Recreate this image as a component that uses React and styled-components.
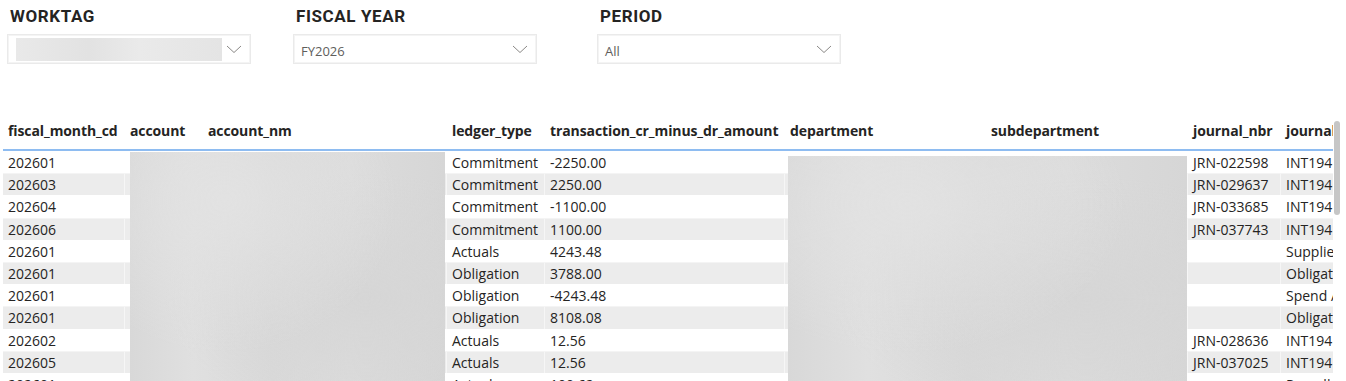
import React from 'react'
import styled, { createGlobalStyle } from 'styled-components'

const Global = createGlobalStyle`
  html, body {
    margin: 0;
    padding: 0;
    background: #ffffff;
    overflow: hidden;
  }
  body {
    font-family: "Open Sans", "Noto Sans", sans-serif;
    color: #252423;
  }
`;

const Page = styled.div`
  width: 1346px;
  height: 381px;
  position: relative;
  overflow: hidden;
`;

const Slicers = styled.div`
  display: flex;
  align-items: flex-start;
  padding: 6px 0 0 7px;
  height: 106px;
  box-sizing: border-box;
`;

const Slicer = styled.div`
  width: 244px;
  margin-left: ${(props) => props.offset || 0}px;
  display: flex;
  flex-direction: column;
`;

const SlicerTitle = styled.div`
  font-family: "Roboto", "Liberation Sans", sans-serif;
  font-weight: 700;
  font-size: 17px;
  line-height: 20px;
  letter-spacing: 0.6px;
  color: #252423;
  padding-left: 3px;
  height: 28px;
`;

const Dropdown = styled.div`
  height: 30px;
  box-sizing: border-box;
  border: 1px solid #eaeaea;
  box-shadow: inset 0 0 0 1px #f4f4f4;
  display: flex;
  align-items: center;
  justify-content: space-between;
  padding: 3px 5px 0 7px;
  font-size: 13px;
  color: #605e5c;
`;

const Hidden = styled.div`
  width: 206px;
  height: 23px;
  margin-left: 1px;
  margin-top: -3px;
  background: linear-gradient(90deg, #e9e9e9 0%, #e2e2e2 35%, #eaeaea 60%, #e4e4e4 100%);
  filter: blur(0.6px);
`;

const Chevron = () => (
  <svg width="16" height="9" viewBox="0 0 16 9" style={{ marginRight: 3, marginTop: -3 }}>
    <path d="M1 1 L8 7.5 L15 1" fill="none" stroke="#8a8886" strokeWidth="1" />
  </svg>
);

const TableArea = styled.div`
  position: relative;
  margin-left: 3px;
  width: 1330px;
  overflow: hidden;
`;

const Row = styled.div`
  display: grid;
  grid-template-columns: 122px 78px 244px 98px 240px 201px 202px 93px 120px;
  height: ${(props) => (props.head ? '45px' : '22.2px')};
  align-items: ${(props) => (props.head ? 'center' : 'stretch')};
  background: ${(props) => (props.alt ? '#ececec' : '#ffffff')};
  border-bottom: ${(props) => (props.head ? '2px solid #8ebcf1' : 'none')};
  box-sizing: border-box;
`;

const HeadCell = styled.div`
  font-weight: 700;
  font-size: 14px;
  padding-left: 5px;
  padding-top: 5px;
  white-space: nowrap;
  overflow: hidden;
  letter-spacing: -0.1px;
`;

const Cell = styled.div`
  font-size: 14px;
  line-height: 22px;
  padding-left: 5px;
  white-space: nowrap;
  overflow: hidden;
  border-right: 1px solid ${(props) => (props.alt ? '#f6f6f6' : '#ffffff')};
  border-top: 1px solid ${(props) => (props.alt ? '#f4f4f4' : 'transparent')};
  box-sizing: border-box;
  color: #252423;
`;

const Redaction = styled.div`
  position: absolute;
  left: ${(props) => props.x}px;
  top: ${(props) => props.y}px;
  width: ${(props) => props.w}px;
  bottom: 0;
  background:
    radial-gradient(ellipse at 30% 20%, #e2e2e2 0%, transparent 55%),
    radial-gradient(ellipse at 75% 60%, #d6d6d6 0%, transparent 60%),
    linear-gradient(90deg, #d8d8d8 0%, #e0e0e0 20%, #d9d9d9 45%, #dcdcdc 70%, #d6d6d6 100%);
`;

const ScrollThumb = styled.div`
  position: absolute;
  left: 1334px;
  top: 121px;
  width: 6px;
  height: 94px;
  border-radius: 3px;
  background: #c6c6c6;
`;

const headers = [
  'fiscal_month_cd',
  'account',
  'account_nm',
  'ledger_type',
  'transaction_cr_minus_dr_amount',
  'department',
  'subdepartment',
  'journal_nbr',
  'journal',
];

const rows = [
  ['202601', 'Commitment', '-2250.00', 'JRN-022598', 'INT194'],
  ['202603', 'Commitment', '2250.00', 'JRN-029637', 'INT194'],
  ['202604', 'Commitment', '-1100.00', 'JRN-033685', 'INT194'],
  ['202606', 'Commitment', '1100.00', 'JRN-037743', 'INT194'],
  ['202601', 'Actuals', '4243.48', '', 'Supplier'],
  ['202601', 'Obligation', '3788.00', '', 'Obligation'],
  ['202601', 'Obligation', '-4243.48', '', 'Spend Authorization'],
  ['202601', 'Obligation', '8108.08', '', 'Obligation'],
  ['202602', 'Actuals', '12.56', 'JRN-028636', 'INT194'],
  ['202605', 'Actuals', '12.56', 'JRN-037025', 'INT194'],
  ['202601', 'Actuals', '100.62', '', 'Payroll'],
];

export default function App() {
  return (
    <Page>
      <Global />
      <Slicers>
        <Slicer>
          <SlicerTitle>WORKTAG</SlicerTitle>
          <Dropdown>
            <Hidden />
            <Chevron />
          </Dropdown>
        </Slicer>
        <Slicer offset={42}>
          <SlicerTitle>FISCAL YEAR</SlicerTitle>
          <Dropdown>
            FY2026
            <Chevron />
          </Dropdown>
        </Slicer>
        <Slicer offset={60}>
          <SlicerTitle>PERIOD</SlicerTitle>
          <Dropdown>
            All
            <Chevron />
          </Dropdown>
        </Slicer>
      </Slicers>
      <TableArea>
        <Row head>
          {headers.map((h) => (
            <HeadCell key={h}>{h}</HeadCell>
          ))}
        </Row>
        {rows.map((r, i) => {
          const alt = i % 2 === 1;
          return (
            <Row key={i} alt={alt}>
              <Cell alt={alt}>{r[0]}</Cell>
              <Cell alt={alt} />
              <Cell alt={alt} />
              <Cell alt={alt}>{r[1]}</Cell>
              <Cell alt={alt}>{r[2]}</Cell>
              <Cell alt={alt} />
              <Cell alt={alt} />
              <Cell alt={alt}>{r[3]}</Cell>
              <Cell alt={alt}>{r[4]}</Cell>
            </Row>
          );
        })}
        <Redaction x={127} y={46} w={315} />
        <Redaction x={785} y={50} w={399} />
      </TableArea>
      <ScrollThumb />
    </Page>
  );
}
